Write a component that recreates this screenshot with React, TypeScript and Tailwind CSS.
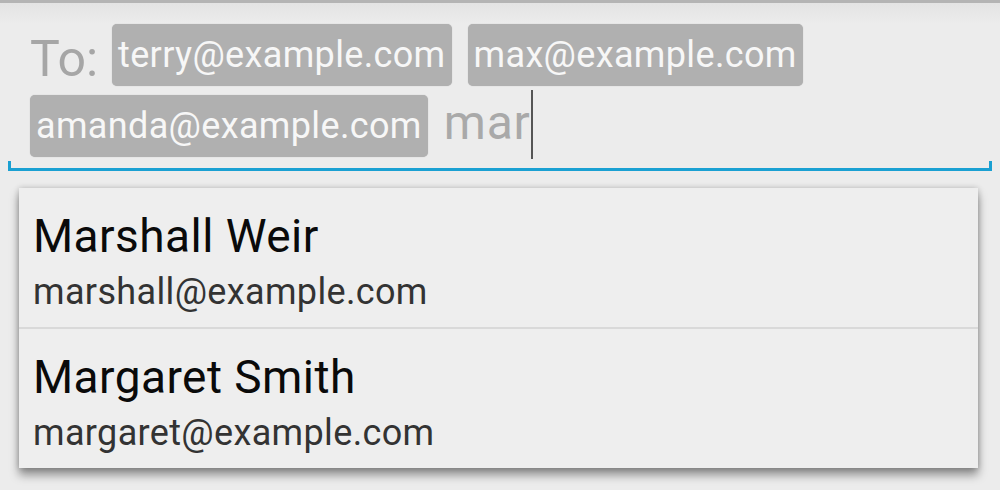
import React from "react";

const chips = ["terry@example.com", "max@example.com", "amanda@example.com"];

function Chip({ label }: { label: string }) {
  return (
    <div className="h-[62px] flex items-center px-[6px] rounded-[5px] bg-[#b0b0b0] text-[36px] leading-none tracking-[0.35px] text-[#f7f7f7] shadow-[0_0_1px_rgba(0,0,0,0.25)]">
      {label}
    </div>
  );
}

function Suggestion({ name, email }: { name: string; email: string }) {
  return (
    <div className="h-[139px] pl-[14px] pt-[25px]">
      <div className="text-[46px] leading-none tracking-[0.45px] text-[#0a0a0a]">{name}</div>
      <div className="mt-[15px] text-[36px] leading-none tracking-[0.35px] text-[#333333]">{email}</div>
    </div>
  );
}

export default function App() {
  return (
    <div
      className="w-[1000px] h-[490px] overflow-hidden bg-[linear-gradient(#e2e2e2,#ececec_24px)]"
      style={{ fontFamily: "Roboto, 'Noto Sans', sans-serif" }}
    >
      <div className="h-[3px] bg-[#b4b4b4]" />
      <div className="pl-[30px] pr-[10px] pt-[21px]">
        <div className="flex flex-wrap items-start gap-x-[14px] gap-y-[9px]">
          <div className="mt-[10px] text-[50px] leading-none text-[#a6a6a6]">To:</div>
          <Chip label={chips[0]} />
          <div className="ml-[2px]">
            <Chip label={chips[1]} />
          </div>
          <Chip label={chips[2]} />
          <div className="ml-[2px] flex items-start">
            <span className="mt-[4px] text-[48px] leading-none tracking-[0.8px] text-[#a9a9a9]">mar</span>
            <div className="-mt-[5px] w-[2px] h-[69px] bg-[#555555]" />
          </div>
        </div>
      </div>
      <div className="ml-[8px] mr-[8px] mt-[2px] h-[10px] border-x-[3px] border-b-[3px] border-[#1aa0d2]" />
      <div className="ml-[19px] mt-[17px] w-[959px] bg-[#eeeeee] shadow-[0_7px_9px_rgba(0,0,0,0.4),0_0_6px_rgba(0,0,0,0.2)]">
        <Suggestion name="Marshall Weir" email="marshall@example.com" />
        <div className="h-[2px] bg-[#d9d9d9]" />
        <Suggestion name="Margaret Smith" email="margaret@example.com" />
      </div>
    </div>
  );
}
